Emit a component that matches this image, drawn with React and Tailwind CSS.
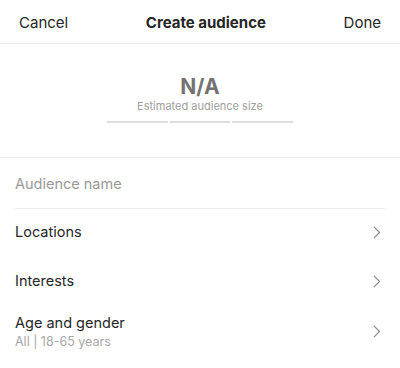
import React from 'react';

function Chevron() {
  return (
    <svg width="8" height="13" viewBox="0 0 8 13" fill="none" className="shrink-0">
      <path d="M1.2 1.2L6.5 6.5L1.2 11.8" stroke="#8e8e8e" strokeWidth="1.2" strokeLinecap="round" strokeLinejoin="round" />
    </svg>
  );
}

function Row({ title }) {
  return (
    <div className="flex items-center justify-between h-[49px] pb-[3px] pl-[15px] pr-[19px]">
      <span className="text-[14.5px] leading-[20px] text-[#262626]">{title}</span>
      <Chevron />
    </div>
  );
}

export default function App() {
  return (
    <div className="w-[400px] h-[368px] bg-white overflow-hidden" style={{ fontFamily: 'Inter, "Noto Sans", sans-serif' }}>
      <div className="flex items-center justify-between h-[44px] pt-[3px] px-[19px] border-b border-[#efefef]">
        <button className="text-[15px] text-[#262626]">Cancel</button>
        <h1 className="text-[15px] font-bold text-[#262626]">Create audience</h1>
        <button className="text-[15px] text-[#262626]">Done</button>
      </div>

      <div className="flex flex-col items-center h-[114px] pt-[31px] border-b border-[#efefef]">
        <div className="text-[21px] leading-[24px] font-bold text-[#737373]">N/A</div>
        <div className="text-[11px] leading-[14px] text-[#a0a0a0]">Estimated audience size</div>
        <div className="flex gap-[2px] mt-[8px]">
          <div className="w-[61px] h-[2px] bg-[#dedede]" />
          <div className="w-[60px] h-[2px] bg-[#dedede]" />
          <div className="w-[61px] h-[2px] bg-[#dedede]" />
        </div>
      </div>

      <div className="mx-[15px] h-[51px] pt-[1px] flex items-center border-b border-[#efefef]">
        <input
          placeholder="Audience name"
          className="w-full text-[14.5px] text-[#262626] placeholder:text-[#9a9a9a] outline-none bg-transparent"
        />
      </div>

      <Row title="Locations" />
      <Row title="Interests" />
      <div className="flex items-center justify-between h-[49px] pl-[15px] pr-[19px]">
        <div className="flex flex-col">
          <span className="text-[14.5px] leading-[20px] text-[#262626]">Age and gender</span>
          <span className="text-[12.5px] leading-[17px] text-[#a8a8a8]">All | 18-65 years</span>
        </div>
        <Chevron />
      </div>
    </div>
  );
}
